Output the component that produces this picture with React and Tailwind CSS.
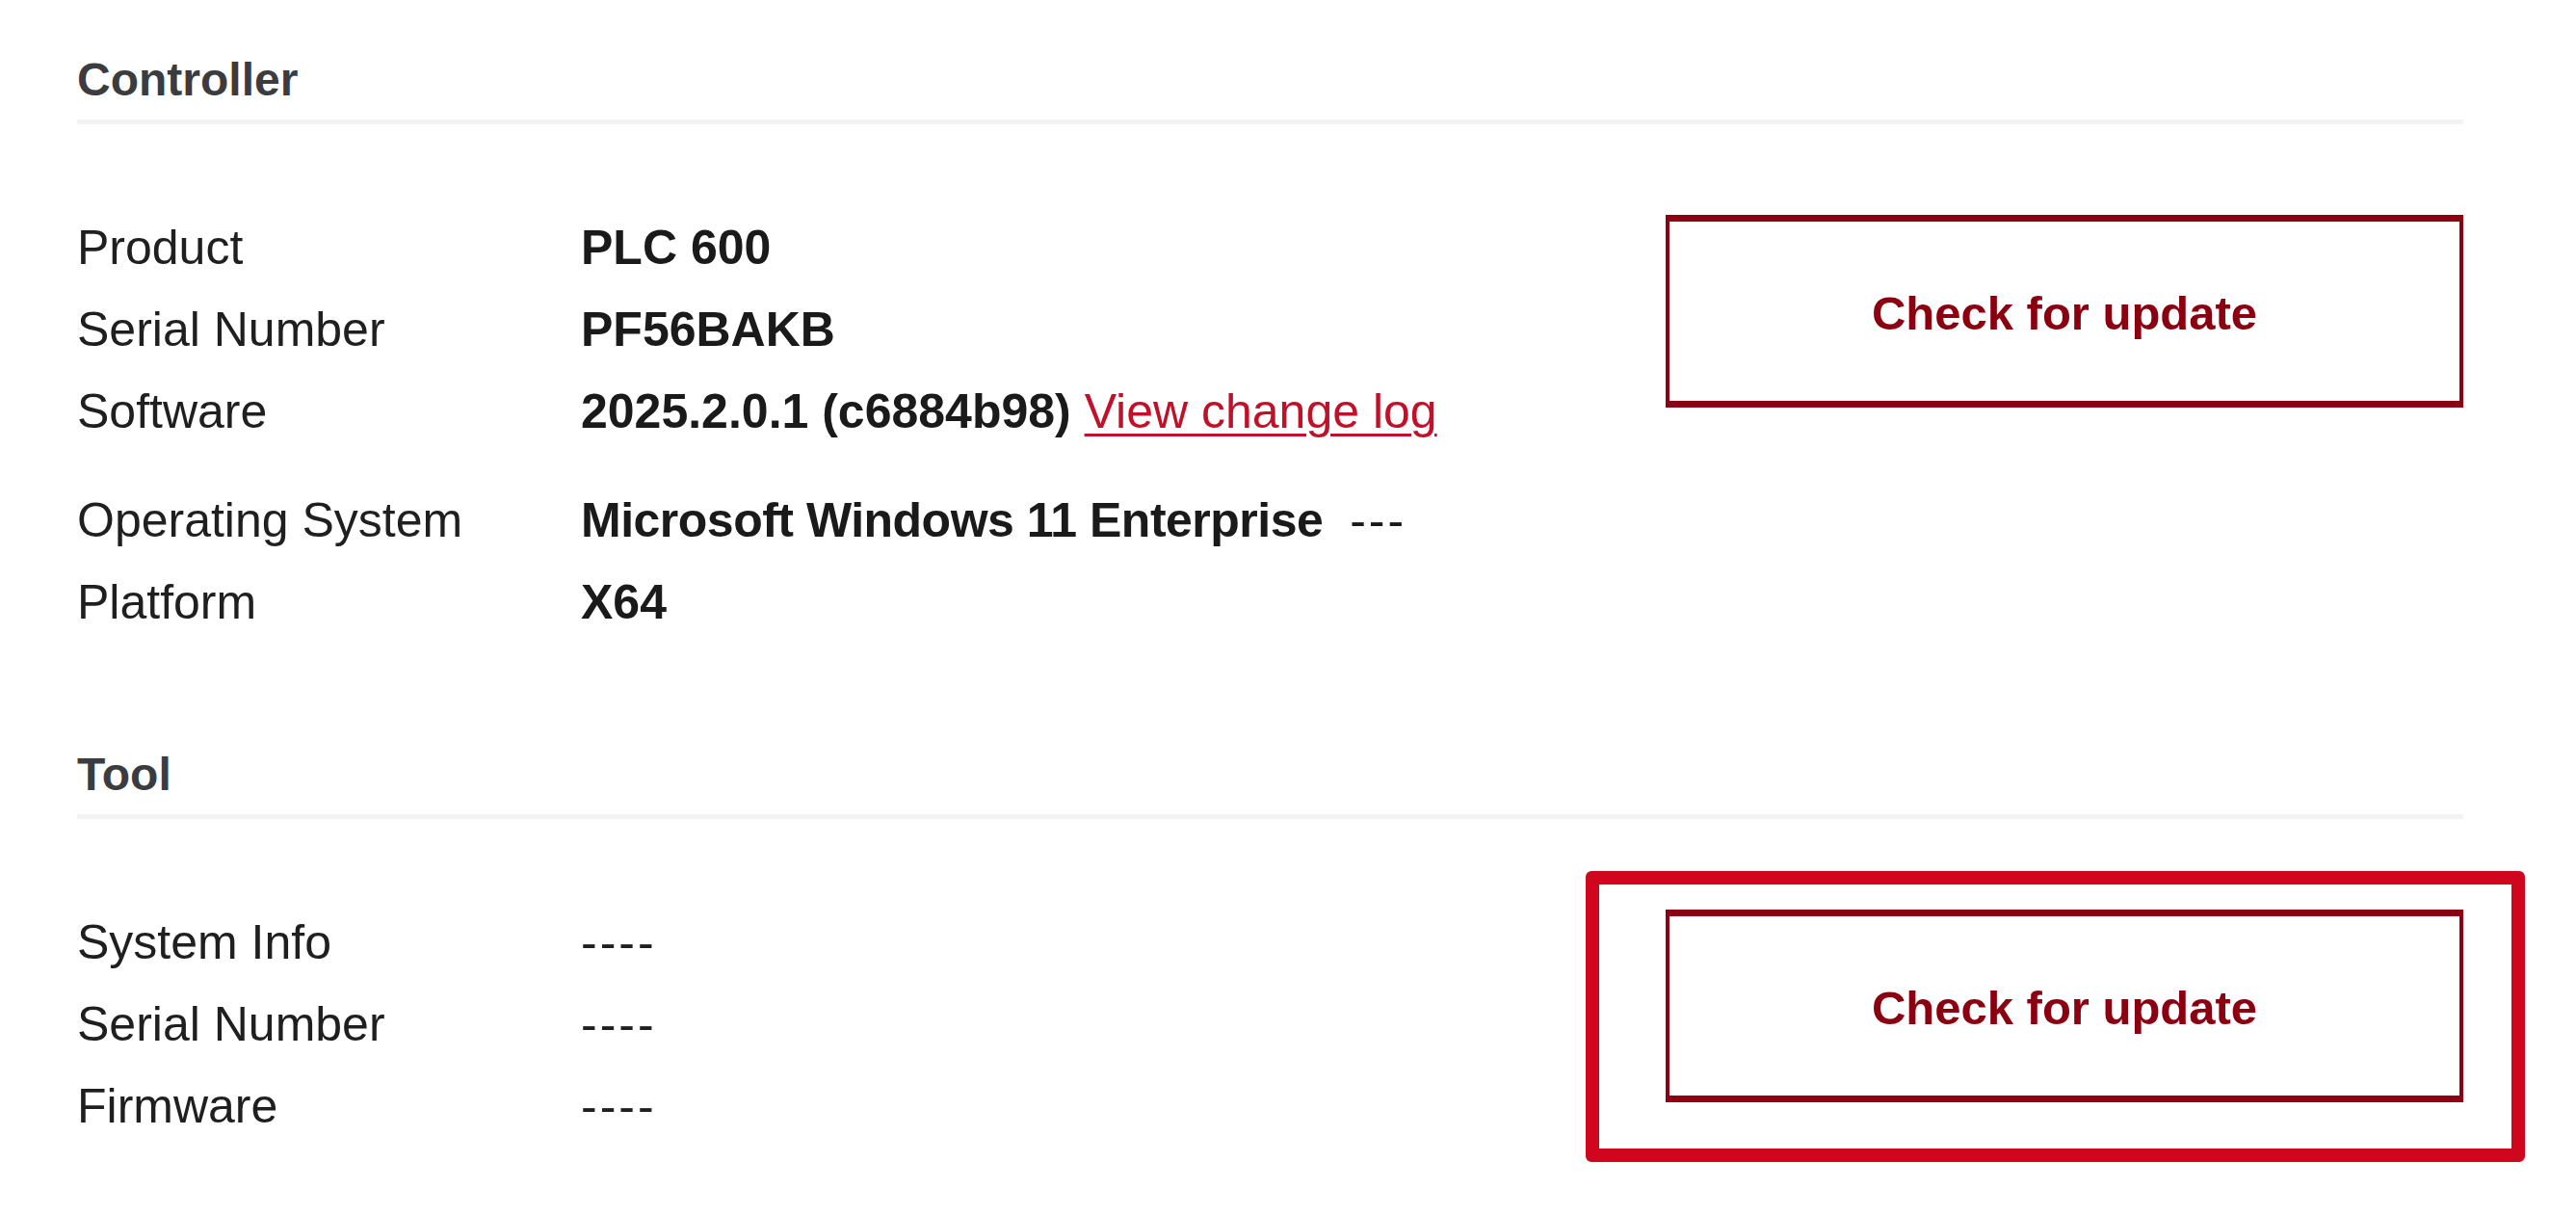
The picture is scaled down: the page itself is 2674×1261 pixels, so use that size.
import React from 'react';

const controllerRows = [
  { label: 'Product', value: 'PLC 600' },
  { label: 'Serial Number', value: 'PF56BAKB' },
  { label: 'Software', value: '2025.2.0.1 (c6884b98)', link: 'View change log' },
  { label: 'Operating System', value: 'Microsoft Windows 11 Enterprise', suffix: '---', gap: true, tight: true },
  { label: 'Platform', value: 'X64' },
];

const toolRows = [
  { label: 'System Info', plain: '----' },
  { label: 'Serial Number', plain: '----' },
  { label: 'Firmware', plain: '----' },
];

function InfoRow({ row }) {
  return (
    <div className={`flex h-[85px] items-center leading-[85px] ${row.gap ? 'mt-[28px]' : ''}`}>
      <div className="w-[523px] shrink-0 text-[#1f1f1f]">{row.label}</div>
      <div className="whitespace-pre">
        {row.value && (
          <span className={`font-bold text-[#1a1a1a] ${row.tight ? 'tracking-[-0.5px]' : ''}`}>{row.value}</span>
        )}
        {row.link && (
          <>
            {' '}
            <a href="#" className="text-[#c0102a] underline decoration-[3px] underline-offset-[6px]">
              {row.link}
            </a>
          </>
        )}
        {row.suffix && (
          <>
            <span>{'  '}</span>
            <span className="tracking-[3px] text-[#1a1a1a]">{row.suffix}</span>
          </>
        )}
        {row.plain && <span className="tracking-[3px] text-[#1f1f1f]">{row.plain}</span>}
      </div>
    </div>
  );
}

function UpdateButton({ highlighted }) {
  return (
    <div className="relative mt-[8px] ml-auto">
      <button className="flex h-[200px] w-[828px] items-center justify-center border-x-[4px] border-y-[7px] border-[#8b0012] bg-white pt-[6px] text-[49px] font-bold text-[#8a0010]">
        Check for update
      </button>
      {highlighted && (
        <div className="pointer-events-none absolute -top-[40px] -right-[64px] -bottom-[62px] -left-[83px] rounded-[6px] border-[14px] border-[#d0061f]" />
      )}
    </div>
  );
}

function Section({ title, rows, highlighted, className }) {
  return (
    <section className={className}>
      <h2 className="text-[48px] font-bold leading-none text-[#3b3c40]">{title}</h2>
      <div className="mt-[17px] h-[5px] bg-[#f3f3f3]" />
      <div className="mt-[86px] flex items-start">
        <div className="flex flex-col">
          {rows.map((row) => (
            <InfoRow key={row.label} row={row} />
          ))}
        </div>
        <UpdateButton highlighted={highlighted} />
      </div>
    </section>
  );
}

export default function App() {
  return (
    <div className="min-h-screen bg-white font-['Liberation_Sans',Arial,sans-serif] text-[50px]">
      <div className="w-[2557px] pl-[80px] pt-[59px]">
        <Section title="Controller" rows={controllerRows} />
        <Section title="Tool" rows={toolRows} highlighted className="mt-[112px]" />
      </div>
    </div>
  );
}
